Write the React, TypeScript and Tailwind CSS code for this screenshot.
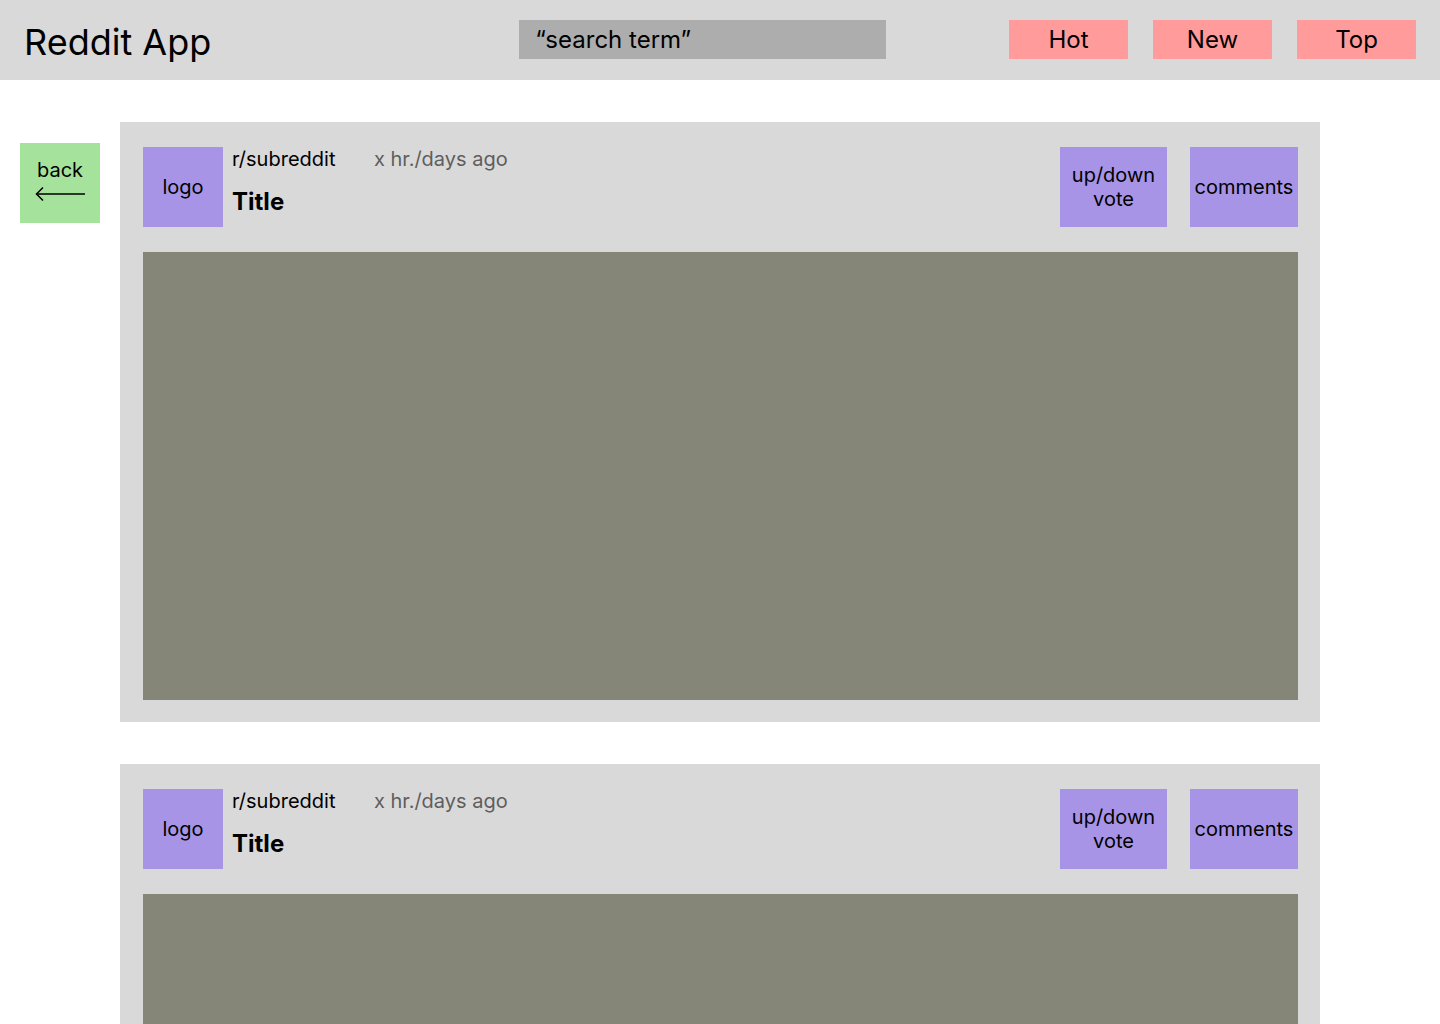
import React from "react";

function Card() {
  return (
    <div className="bg-[#d9d9d9] pt-[25px] pl-[23px] pr-[22px] pb-[22px]">
      <div className="flex h-[80px]">
        <div className="w-[80px] h-[80px] bg-[#a794e6] flex items-center justify-center text-[20px] text-black">
          logo
        </div>
        <div className="ml-[9px] flex flex-col">
          <div className="flex text-[20px] leading-[24px]">
            <span className="w-[142px] text-black">r/subreddit</span>
            <span className="text-[#5e5e5e]">x hr./days ago</span>
          </div>
          <div className="mt-[16px] text-[24px] leading-[30px] font-bold text-black">Title</div>
        </div>
        <div className="ml-auto flex gap-[23px]">
          <div className="w-[107px] h-[80px] bg-[#a794e6] flex items-center justify-center text-center text-[20px] leading-[24px] text-black">
            up/down
            <br />
            vote
          </div>
          <div className="w-[108px] h-[80px] bg-[#a794e6] flex items-center justify-center text-[20px] text-black">
            comments
          </div>
        </div>
      </div>
      <div className="mt-[25px] h-[448px] bg-[#868678]" />
    </div>
  );
}

export default function App() {
  return (
    <div className="w-[1440px] h-[1024px] overflow-hidden bg-white font-['Inter',_sans-serif]">
      <header className="h-[80px] bg-[#d9d9d9] flex items-start">
        <div className="pl-[24px] pt-[24px] text-[36px] leading-[36px] text-black">Reddit App</div>
        <div className="mt-[20px] ml-[308px] w-[367px] h-[39px] bg-[#adadad] flex items-center pl-[16px] text-[24px] text-black">
          “search term”
        </div>
        <div className="mt-[20px] ml-auto mr-[24px] flex gap-[25px]">
          {["Hot", "New", "Top"].map((t) => (
            <div key={t} className="w-[119px] h-[39px] bg-[#ff9b9b] flex items-center justify-center text-[24px] text-black">
              {t}
            </div>
          ))}
        </div>
      </header>
      <main className="flex pt-[42px] pl-[20px]">
        <div className="w-[100px]">
          <div className="mt-[21px] w-[80px] h-[80px] bg-[#a5e29b] flex flex-col items-center pt-[15px]">
            <span className="text-[20px] leading-[24px] text-black">back</span>
            <svg width="52" height="16" viewBox="0 0 52 16" className="mt-[4px]">
              <line x1="2" y1="8" x2="51" y2="8" stroke="black" strokeWidth="1.5" />
              <polyline points="9,1.5 2.5,8 9,14.5" fill="none" stroke="black" strokeWidth="1.5" />
            </svg>
          </div>
        </div>
        <div className="w-[1200px] flex flex-col gap-[42px]">
          <Card />
          <Card />
        </div>
      </main>
    </div>
  );
}
